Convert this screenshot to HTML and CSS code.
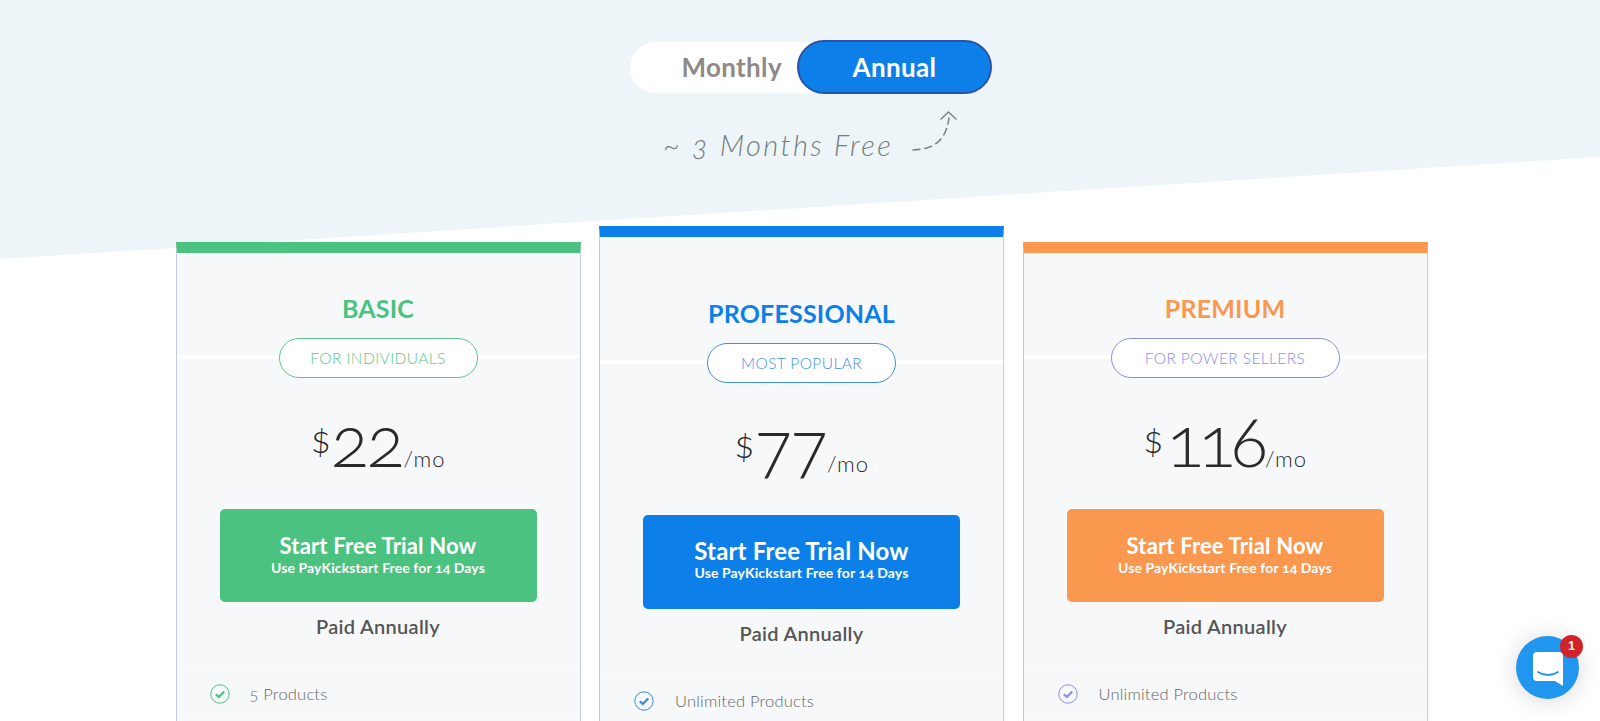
FILE: index.html
```html
<!DOCTYPE html>
<html lang="en">
<head>
<meta charset="utf-8">
<title>Pricing</title>
<link rel="stylesheet" href="styles.css">
</head>
<body>
<div class="page">
  <div class="hero-bg"></div>
  <div class="toggle">
    <span class="toggle-off">Monthly</span>
    <span class="toggle-on">Annual</span>
  </div>
  <div class="promo">
    <span class="promo-text">~ 3 Months Free</span>
    <svg class="promo-arrow" width="48" height="44" viewBox="0 0 48 44" fill="none" stroke="#7c8488" stroke-width="1.6" stroke-linecap="round">
      <path d="M2 40 C16 39 34 37 38 8" stroke-dasharray="7 5"/>
      <path d="M30 9 L37.500 2 L45 9"/>
    </svg>
  </div>
  <div class="plans">
    <section class="card basic">
      <h2 class="title">BASIC</h2>
      <div class="tag-row"><span class="tag">FOR INDIVIDUALS</span></div>
      <div class="price"><span class="cur">$</span><span class="amt">22</span><span class="per">/mo</span></div>
      <a class="cta"><b>Start Free Trial Now</b><small>Use PayKickstart Free for 14 Days</small></a>
      <p class="paid">Paid Annually</p>
      <ul class="feats">
        <li><svg class="chk" width="20" height="20" viewBox="0 0 20 20"><circle cx="10" cy="10" r="9.200" fill="none" stroke="currentColor" stroke-width="1"/><path d="M5.800 10.200 L8.800 13 L14.200 7.500" fill="none" stroke="currentColor" stroke-width="2.200"/></svg>5 Products</li>
      </ul>
    </section>
    <section class="card pro">
      <h2 class="title">PROFESSIONAL</h2>
      <div class="tag-row"><span class="tag">MOST POPULAR</span></div>
      <div class="price"><span class="cur">$</span><span class="amt">77</span><span class="per">/mo</span></div>
      <a class="cta"><b>Start Free Trial Now</b><small>Use PayKickstart Free for 14 Days</small></a>
      <p class="paid">Paid Annually</p>
      <ul class="feats">
        <li><svg class="chk" width="20" height="20" viewBox="0 0 20 20"><circle cx="10" cy="10" r="9.200" fill="none" stroke="currentColor" stroke-width="1"/><path d="M5.800 10.200 L8.800 13 L14.200 7.500" fill="none" stroke="currentColor" stroke-width="2.200"/></svg>Unlimited Products</li>
      </ul>
    </section>
    <section class="card premium">
      <h2 class="title">PREMIUM</h2>
      <div class="tag-row"><span class="tag">FOR POWER SELLERS</span></div>
      <div class="price"><span class="cur">$</span><span class="amt">116</span><span class="per">/mo</span></div>
      <a class="cta"><b>Start Free Trial Now</b><small>Use PayKickstart Free for 14 Days</small></a>
      <p class="paid">Paid Annually</p>
      <ul class="feats">
        <li><svg class="chk" width="20" height="20" viewBox="0 0 20 20"><circle cx="10" cy="10" r="9.200" fill="none" stroke="currentColor" stroke-width="1"/><path d="M5.800 10.200 L8.800 13 L14.200 7.500" fill="none" stroke="currentColor" stroke-width="2.200"/></svg>Unlimited Products</li>
      </ul>
    </section>
  </div>
  <div class="chat">
    <svg width="32" height="36" viewBox="0 0 32 36">
      <path d="M5 1 H27 a4 4 0 0 1 4 4 V35 L23 30 H5 a4 4 0 0 1 -4 -4 V5 a4 4 0 0 1 4 -4 Z" fill="#fff"/>
      <path d="M6 21 C12 25 20 25 26 21" fill="none" stroke="#2196ee" stroke-width="1.800" stroke-linecap="round"/>
    </svg>
    <span class="badge">1</span>
  </div>
</div>
</body>
</html>
```
FILE: styles.css
```css
* { box-sizing: border-box; }
html, body { margin: 0; padding: 0; background: #fff; }
body { font-family: Lato, "Open Sans", sans-serif; font-variant-numeric: oldstyle-nums; }
.page { position: relative; height: 721px; overflow: hidden; padding-top: 40px; }
.hero-bg { position: absolute; inset: 0 0 auto 0; height: 260px; background: #eef5f9; clip-path: polygon(0 0, 100% 0, 100% 157px, 0 259px); }

.toggle { position: relative; display: flex; align-items: center; margin-left: 630px; width: 362px; height: 54px; }
.toggle-off { display: flex; align-items: center; justify-content: flex-end; width: 200px; height: 51px; padding-right: 48px; background: #fff; border-radius: 26px 0 0 26px; font-size: 26px; font-weight: 700; color: #8f8a88; letter-spacing: .35px; }
.toggle-on { display: flex; align-items: center; justify-content: center; width: 195px; height: 54px; margin-left: -33px; background: #0d7fe8; border: 2px solid #2a52a8; border-radius: 27px; font-size: 26px; font-weight: 700; color: #fff; letter-spacing: .35px; z-index: 1; }

.promo { position: relative; display: flex; margin: 19px 0 0 663px; height: 44px; }
.promo-text { align-self: flex-end; margin-bottom: -5px; font-size: 29px; font-weight: 300; font-style: italic; color: #757d80; letter-spacing: 2.400px; line-height: 34px; white-space: nowrap; }
.promo-arrow { margin: -3px 0 0 18px; }

.plans { position: relative; display: flex; align-items: flex-start; gap: 18.500px; margin-top: 85px; padding-left: 175.500px; }
.card { flex: 0 0 405px; height: 600px; background: #f7f8fa; border: solid #c5cbdb; border-width: 0 1.500px; border-top: 11px solid var(--c); padding-top: 40px; text-align: center; }
.basic { --c: #4bc27f; --tag: #5cc588; --ic: #4bc27f; }
.pro { --c: #0d7fe8; --tag: #3f8fe6; --ic: #2f88e8; margin-top: -16px; padding-top: 61px; }
.premium { --c: #fa9850; --tag: #8a8ee8; --ic: #8a8ee8; }

.title { margin: 0; font-size: 25px; line-height: 30px; font-weight: 700; color: var(--c); letter-spacing: .2px; }
.tag-row { display: flex; justify-content: center; height: 40px; margin-top: 15px; background: linear-gradient(#fff, #fff) 0 17px / 100% 4px no-repeat; }
.tag { display: flex; align-items: center; justify-content: center; height: 40px; padding: 0; background: #fff; border: 1px solid var(--tag); border-radius: 20px; font-size: 15.500px; font-weight: 300; color: var(--tag); letter-spacing: .4px; }
.basic .tag { width: 199px; }
.pro .tag { width: 189px; }
.premium .tag { width: 229px; }

.price { display: flex; justify-content: center; align-items: baseline; height: 131px; padding-top: 32px; line-height: 60px; color: #2a2a2c; font-weight: 300; }
.pro .price { height: 132px; }
.cur { font-size: 38px; align-self: flex-start; line-height: 48px; margin-top: 4px; }
.amt { font-size: 70px; letter-spacing: -2px; }
.premium .amt { letter-spacing: -6px; margin-left: 3px; }
.per { font-size: 22px; margin-left: 1px; letter-spacing: 1px; }
.premium .per { margin-left: 3px; }

.cta { display: flex; flex-direction: column; align-items: center; justify-content: center; width: 317px; height: 93px; margin: 0 auto; padding-bottom: 4px; border-radius: 5px; background: var(--c); color: #fff; }
.cta b { font-size: 22px; line-height: 28px; font-weight: 700; letter-spacing: .15px; }
.cta small { font-size: 14px; line-height: 16px; font-weight: 700; letter-spacing: .1px; }
.pro .cta { height: 94px; padding-bottom: 6px; }
.pro .cta b { font-size: 24px; }

.paid { margin: 12px 0 0; font-size: 20px; line-height: 24px; font-weight: 600; color: #555; letter-spacing: .3px; }
.feats { list-style: none; margin: 31px 1px 0; padding: 0; border-top: 1px solid #fbfcfd; }
.feats li { display: flex; align-items: center; height: 48px; padding-left: 33px; gap: 21px; border-bottom: 1px solid #fbfcfd; font-size: 16.500px; font-weight: 300; color: #666; letter-spacing: .2px; }
.basic .feats li { padding-left: 32px; gap: 20px; }
.chk { color: var(--ic); flex: none; }

.chat { position: absolute; left: 1516px; top: 636px; display: flex; align-items: center; justify-content: center; width: 63px; height: 63px; padding-top: 2px; border-radius: 50%; background: #2196ee; box-shadow: 0 2px 24px rgba(0,0,0,.16); }
.badge { position: absolute; left: 44px; top: -1px; width: 23px; height: 23px; border-radius: 50%; background: #d0242a; color: #fff; font: 700 12px/23px "Liberation Sans", sans-serif; text-align: center; }
```
